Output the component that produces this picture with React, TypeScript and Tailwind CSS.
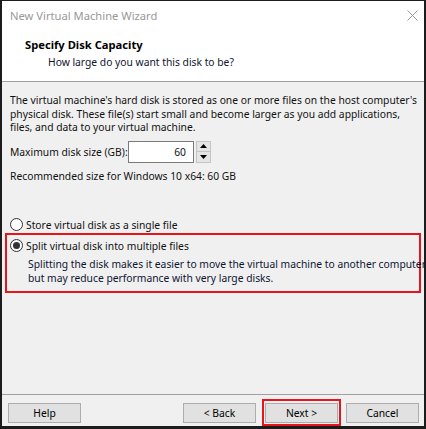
import React from "react";

function Btn({ children, className = "" }: { children: React.ReactNode; className?: string }) {
  return (
    <div
      className={`flex h-[20px] w-[73px] shrink-0 items-center justify-center border border-[#adadad] bg-[#e1e1e1] text-black ${className}`}
    >
      {children}
    </div>
  );
}

function Radio({ checked }: { checked?: boolean }) {
  return (
    <div className="flex h-[13px] w-[13px] shrink-0 items-center justify-center rounded-full border border-[#333] bg-white">
      {checked && <div className="h-[7px] w-[7px] rounded-full bg-[#333]" />}
    </div>
  );
}

export default function App() {
  return (
    <div className="h-[429px] w-[426px] bg-[#1c1c1c] pt-[1px] pl-[2px] pr-[2px] pb-[3px] font-['Noto_Sans',sans-serif] text-[10.3px] leading-[14px] text-[#111]">
      <div className="flex h-full w-full flex-col bg-[#f0f0f0]">
        {/* title + header */}
        <div className="h-[81px] shrink-0 border-b border-[#a0a0a0] bg-white">
          <div className="flex h-[29px] items-center justify-between pl-[8px] pr-[6px]">
            <span className="text-[11.2px] text-[#999]">New Virtual Machine Wizard</span>
            <svg width="11" height="11" viewBox="0 0 11 11">
              <path d="M0.5 0.5 L10.5 10.5 M10.5 0.5 L0.5 10.5" stroke="#9a9a9a" strokeWidth="1" />
            </svg>
          </div>
          <div className="pl-[23px] pt-[8px] text-[11.2px] font-bold text-black">Specify Disk Capacity</div>
          <div className="pl-[46px] pt-[3px] text-[#0f1430]">How large do you want this disk to be?</div>
        </div>

        {/* body */}
        <div className="flex flex-1 flex-col whitespace-nowrap px-[8px] pt-[12px]">
          <p className="leading-[13.5px]">
            The virtual machine's hard disk is stored as one or more files on the host computer's
            <br />
            physical disk. These file(s) start small and become larger as you add applications,
            <br />
            files, and data to your virtual machine.
          </p>
          <div className="mt-[6px] flex items-center">
            <span className="w-[118px]">Maximum disk size (GB):</span>
            <div className="flex h-[22px] w-[66px] items-center justify-end border border-[#7a7a7a] bg-white pr-[7px]">
              60
            </div>
            <div className="ml-[2px] flex h-[22px] w-[15px] flex-col border border-[#c4c4c4] bg-[#f0f0f0]">
              <div className="flex flex-1 items-center justify-center border-b border-[#c4c4c4] bg-[#e5e5e5]">
                <svg width="7" height="4" viewBox="0 0 7 4"><path d="M3.5 0 L7 4 L0 4 Z" fill="#000" /></svg>
              </div>
              <div className="flex flex-1 items-center justify-center bg-[#e5e5e5]">
                <svg width="7" height="4" viewBox="0 0 7 4"><path d="M0 0 L7 0 L3.5 4 Z" fill="#000" /></svg>
              </div>
            </div>
          </div>
          <div className="mt-[6px]">Recommended size for Windows 10 x64: 60 GB</div>

          <div className="mt-[35px] flex items-center gap-[3px]">
            <Radio />
            <span>Store virtual disk as a single file</span>
          </div>
          <div className="-mx-[5px] mt-[1px] border-2 border-[#e8141c] pb-[6px] pl-[3px] pr-[2px] pt-[4px]">
            <div className="flex items-center gap-[3px]">
              <Radio checked />
              <span>Split virtual disk into multiple files</span>
            </div>
            <div className="mt-[4px] pl-[18px] text-[#0f1430]">
              Splitting the disk makes it easier to move the virtual machine to another computer
              <br />
              but may reduce performance with very large disks.
            </div>
          </div>
        </div>

        {/* footer */}
        <div className="h-[32px] shrink-0 border-t border-[#a0a0a0] pl-[6px] pr-[5px]">
          <div className="flex items-start">
            <Btn className="mt-[8px]">Help</Btn>
            <div className="flex-1" />
            <Btn className="mt-[8px]">&lt; Back</Btn>
            <div className="ml-[6px] mt-[4px] border-2 border-[#e8141c] px-[1px] pb-[1px] pt-[2px]">
              <Btn>Next &gt;</Btn>
            </div>
            <Btn className="ml-[5px] mt-[8px]">Cancel</Btn>
          </div>
        </div>
      </div>
    </div>
  );
}
